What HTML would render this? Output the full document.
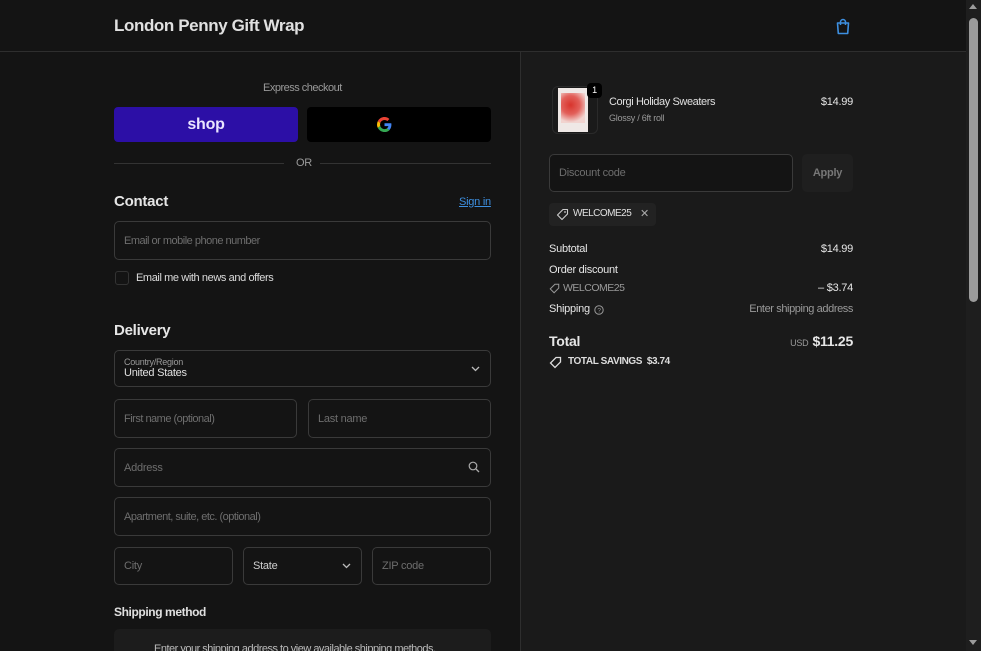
<!DOCTYPE html>
<html><head><meta charset="utf-8"><style>
*{box-sizing:border-box;margin:0;padding:0}
html,body{width:981px;height:651px;overflow:hidden}
body{background:#141414;font-family:"Liberation Sans",sans-serif;color:#e6e6e6;position:relative;letter-spacing:-.25px}
.hdr{position:absolute;left:0;top:0;width:966px;height:52px;border-bottom:1px solid #2e2e2e;background:#141414}
.hdr h1{position:absolute;left:114px;top:16px;font-size:17px;font-weight:bold;color:#e0e0e0;letter-spacing:-.4px}
.right{position:absolute;left:520px;top:52px;width:446px;height:599px;background:#1a1a1a;border-left:1px solid #2e2e2e}
.sb{position:absolute;left:966px;top:0;width:15px;height:651px;background:#1e1e1e}
.sb .th{position:absolute;left:3px;top:18px;width:9px;height:284px;background:#9b9b9b;border-radius:5px}
.abs{position:absolute}
.r{position:absolute;right:128px;text-align:right}
.inp{position:absolute;border:1px solid #3a3a3a;border-radius:5px;background:#141414;font-size:11px;color:#6e6e6e;padding-left:9px;display:flex;align-items:center}
.g{color:#9a9a9a}
</style></head><body>
<div class="hdr"><h1>London Penny Gift Wrap</h1>
<svg class="abs" style="left:835px;top:18px" width="16" height="17" viewBox="0 0 16 17"><path d="M2.5 5h11l-.8 10.5H3.3z" fill="none" stroke="#3d8fe0" stroke-width="1.6" stroke-linejoin="round"/><path d="M5.5 7V4a2.5 2.5 0 015 0v3" fill="none" stroke="#3d8fe0" stroke-width="1.5"/></svg>
</div>
<div class="abs g" style="left:263px;top:82px;font-size:11px;letter-spacing:-.5px">Express checkout</div>
<div class="abs" style="left:114px;top:107px;width:184px;height:35px;background:#2c0fa6;border-radius:4px;color:#e9e4ff;font-weight:bold;font-size:16px;text-align:center;line-height:35px">shop</div>
<div class="abs" style="left:307px;top:107px;width:184px;height:35px;background:#000;border-radius:4px"></div>
<svg class="abs" style="left:377px;top:117px" width="15" height="15" viewBox="0 0 48 48"><path fill="#EA4335" d="M24 9.5c3.5 0 6.6 1.2 9 3.5l6.7-6.7C35.6 2.4 30.2 0 24 0 14.6 0 6.6 5.4 2.7 13.3l7.8 6C12.4 13.7 17.7 9.5 24 9.5z"/><path fill="#4285F4" d="M46.1 24.5c0-1.6-.1-3.1-.4-4.5H24v9h12.4c-.5 2.9-2.2 5.3-4.6 7l7.5 5.8c4.4-4 6.8-10 6.8-17.3z"/><path fill="#FBBC05" d="M10.5 28.7A14.5 14.5 0 0110.5 19.3l-7.8-6A24 24 0 000 24c0 3.9.9 7.5 2.7 10.7z"/><path fill="#34A853" d="M24 48c6.5 0 11.9-2.1 15.9-5.8l-7.5-5.8c-2.2 1.5-5 2.3-8.4 2.3-6.3 0-11.6-4.2-13.5-10l-7.8 6C6.6 42.6 14.6 48 24 48z"/></svg>
<div class="abs" style="left:114px;top:163px;width:170px;height:1px;background:#333"></div>
<div class="abs" style="left:320px;top:163px;width:171px;height:1px;background:#333"></div>
<div class="abs g" style="left:296px;top:157px;font-size:11px">OR</div>
<div class="abs" style="left:114px;top:193px;font-size:15px;font-weight:bold;color:#e6e6e6">Contact</div>
<div class="abs" style="left:459px;top:196px;font-size:11px;color:#3d8fe0;text-decoration:underline">Sign in</div>
<div class="inp" style="left:114px;top:221px;width:377px;height:39px;letter-spacing:-.5px">Email or mobile phone number</div>
<div class="abs" style="left:115px;top:271px;width:14px;height:14px;border:1px solid #333;border-radius:3px;background:#141414"></div>
<div class="abs" style="left:136px;top:272px;font-size:11px;color:#dcdcdc;letter-spacing:-.4px">Email me with news and offers</div>
<div class="abs" style="left:114px;top:322px;font-size:15px;font-weight:bold">Delivery</div>
<div class="inp" style="left:114px;top:350px;width:377px;height:37px;display:block;padding-top:6px"><div style="font-size:9px;color:#9a9a9a">Country/Region</div><div style="font-size:11px;color:#e0e0e0;margin-top:0">United States</div></div>
<svg class="abs" style="left:471px;top:366px" width="9" height="6" viewBox="0 0 9 6"><path d="M1 1l3.5 3.5L8 1" fill="none" stroke="#bbb" stroke-width="1.3"/></svg>
<div class="inp" style="left:114px;top:399px;width:183px;height:39px;letter-spacing:-.5px">First name (optional)</div>
<div class="inp" style="left:308px;top:399px;width:183px;height:39px">Last name</div>
<div class="inp" style="left:114px;top:448px;width:377px;height:39px">Address</div>
<svg class="abs" style="left:468px;top:461px" width="12" height="12" viewBox="0 0 12 12"><circle cx="5" cy="5" r="3.8" fill="none" stroke="#aaa" stroke-width="1.2"/><path d="M8 8l3 3" stroke="#aaa" stroke-width="1.3"/></svg>
<div class="inp" style="left:114px;top:497px;width:377px;height:39px;letter-spacing:-.5px">Apartment, suite, etc. (optional)</div>
<div class="inp" style="left:114px;top:547px;width:119px;height:38px">City</div>
<div class="inp" style="left:243px;top:547px;width:119px;height:38px;color:#cfcfcf">State</div>
<svg class="abs" style="left:342px;top:563px" width="9" height="6" viewBox="0 0 9 6"><path d="M1 1l3.5 3.5L8 1" fill="none" stroke="#bbb" stroke-width="1.3"/></svg>
<div class="inp" style="left:372px;top:547px;width:119px;height:38px">ZIP code</div>
<div class="abs" style="left:114px;top:605px;font-size:12px;font-weight:bold;color:#e0e0e0;letter-spacing:-.4px">Shipping method</div>
<div class="abs" style="left:114px;top:629px;width:377px;height:30px;background:#1c1c1c;border-radius:5px"></div>
<div class="abs" style="left:154px;top:643px;font-size:11px;color:#bbb;letter-spacing:-.5px">Enter your shipping address to view available shipping methods.</div>

<div class="right"></div>
<div class="abs" style="left:552px;top:86px;width:46px;height:48px;border:1px solid #2a2a2a;border-radius:6px;background:#1a1a1a"></div>
<div class="abs" style="left:558px;top:88px;width:30px;height:44px;background:#efe8e6"></div>
<div class="abs" style="left:561px;top:93px;width:24px;height:30px;background:radial-gradient(circle at 40% 40%,#d8342c 0,#e2605a 40%,#f1d3cf 75%)"></div>
<div class="abs" style="left:587px;top:83px;width:15px;height:15px;border-radius:4px;background:#000;color:#fff;font-size:9px;text-align:center;line-height:15px">1</div>
<div class="abs" style="left:609px;top:96px;font-size:11px;color:#e0e0e0;letter-spacing:-.4px">Corgi Holiday Sweaters</div>
<div class="abs g" style="left:609px;top:113px;font-size:9px">Glossy / 6ft roll</div>
<div class="r" style="top:96px;font-size:11px">$14.99</div>
<div class="inp" style="left:549px;top:154px;width:244px;height:38px">Discount code</div>
<div class="abs" style="left:802px;top:154px;width:51px;height:38px;background:#1f1f1f;border-radius:5px;color:#777;font-size:11px;font-weight:bold;text-align:center;line-height:38px">Apply</div>
<div class="abs" style="left:549px;top:203px;width:107px;height:23px;background:#222;border-radius:4px"></div>
<svg class="abs" style="left:556px;top:208px" width="13" height="13" viewBox="0 0 13 13"><path d="M7 1.5h4.5V6L6 11.5 1.5 7z" fill="none" stroke="#ccc" stroke-width="1.1" stroke-linejoin="round"/><circle cx="9" cy="4" r=".9" fill="#ccc"/></svg>
<div class="abs" style="left:573px;top:208px;font-size:10px;color:#e0e0e0;letter-spacing:-.5px">WELCOME25</div>
<div class="abs" style="left:640px;top:207px;font-size:11px;color:#aaa">✕</div>
<div class="abs" style="left:549px;top:243px;font-size:11px">Subtotal</div>
<div class="r" style="top:243px;font-size:11px">$14.99</div>
<div class="abs" style="left:549px;top:264px;font-size:11px">Order discount</div>
<svg class="abs" style="left:549px;top:283px" width="11" height="11" viewBox="0 0 13 13"><path d="M7 1.5h4.5V6L6 11.5 1.5 7z" fill="none" stroke="#999" stroke-width="1.2"/></svg>
<div class="abs g" style="left:563px;top:282px;font-size:10.5px;letter-spacing:-.5px">WELCOME25</div>
<div class="r" style="top:282px;font-size:11px">– $3.74</div>
<div class="abs" style="left:549px;top:303px;font-size:11px">Shipping</div>
<svg class="abs" style="left:594px;top:305px" width="10" height="10" viewBox="0 0 10 10"><circle cx="5" cy="5" r="4.2" fill="none" stroke="#999"/><text x="5" y="7.5" font-size="6.5" fill="#999" text-anchor="middle" font-family="Liberation Sans">?</text></svg>
<div class="r g" style="top:303px;font-size:11px;letter-spacing:-.4px">Enter shipping address</div>
<div class="abs" style="left:549px;top:333px;font-size:14px;font-weight:bold">Total</div>
<div class="r" style="top:333px;font-size:14px;font-weight:bold"><span style="font-size:9px;font-weight:normal;color:#9a9a9a;margin-right:4px">USD</span>$11.25</div>
<svg class="abs" style="left:549px;top:356px" width="13" height="13" viewBox="0 0 13 13"><path d="M7 1.5h4.5V6L6 11.5 1.5 7z" fill="none" stroke="#ddd" stroke-width="1.3"/></svg>
<div class="abs" style="left:568px;top:356px;font-size:10px;font-weight:bold;color:#ddd;letter-spacing:-.4px">TOTAL SAVINGS&nbsp; $3.74</div>
<div class="sb"><div class="th"></div>
<div class="abs" style="left:3px;top:4px;width:0;height:0;border-left:4px solid transparent;border-right:4px solid transparent;border-bottom:5px solid #9b9b9b"></div>
<div class="abs" style="left:3px;top:640px;width:0;height:0;border-left:4px solid transparent;border-right:4px solid transparent;border-top:5px solid #9b9b9b"></div></div>
</body></html>
